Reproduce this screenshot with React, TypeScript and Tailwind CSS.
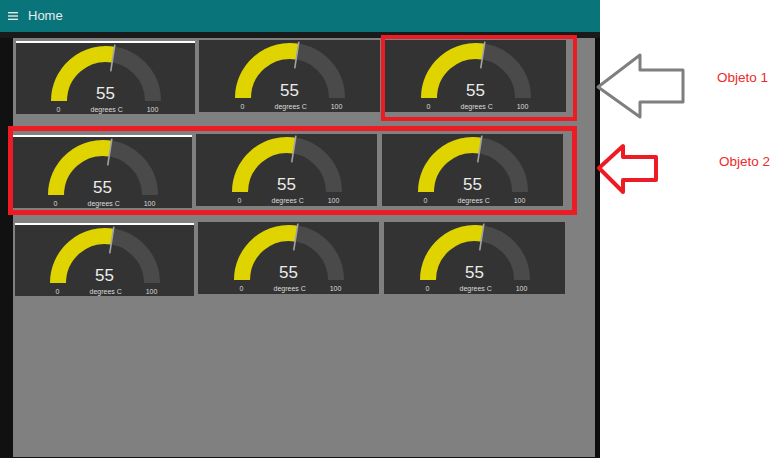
import React from "react";

const font = { fontFamily: '"Liberation Sans", Arial, sans-serif' };

// one gauge widget (value 55 of 0..100)
const Gauge = ({ width, first }: { width: string; first?: boolean }) => {
  return (
    <div
      className={
        "relative shrink-0 bg-[#333333] " +
        width +
        (first ? " mt-[1px] h-[73px] border-t-2 border-white" : " h-[72px]")
      }
    >
      <svg
        className="absolute left-1/2 top-[1px] -translate-x-1/2"
        width="116"
        height="58"
        viewBox="0 0 116 58"
      >
        <path d="M 11 57 A 47 47 0 0 1 105 57" fill="none" stroke="#4a4a4a" strokeWidth="16" />
        <path d="M 11 57 A 47 47 0 0 1 65.35 10.58" fill="none" stroke="#e0d400" strokeWidth="16" />
        <line x1="66.9" y1="0.7" x2="62.7" y2="27.4" stroke="#a3a3a3" strokeWidth="1.6" />
      </svg>
      <div className="relative flex flex-col items-center pt-[42px]">
        <div className="text-[17px] leading-[17px] text-[#ececec]">55</div>
        <div className="mt-[4px] flex gap-[17px] text-[7px] leading-[7px] text-[#dddddd]">
          <span className="w-[30px] text-center">0</span>
          <span className="w-[30px] whitespace-nowrap text-center">degrees C</span>
          <span className="w-[30px] text-center">100</span>
        </div>
      </div>
    </div>
  );
};

const Row = ({ className }: { className: string }) => (
  <div className={"flex items-start " + className}>
    <Gauge width="w-[179px]" first />
    <div className="w-[4px] shrink-0" />
    <Gauge width="w-[181px]" />
    <div className="w-[5px] shrink-0" />
    <Gauge width="w-[181px]" />
  </div>
);

export default function App() {
  return (
    <div className="relative flex h-[458px] w-[778px] overflow-hidden bg-white" style={font}>
      {/* dashboard */}
      <div className="flex w-[600px] shrink-0 flex-col bg-[#111111]">
        <div className="flex h-[32px] items-center gap-[10px] bg-[#097479] pl-[8px]">
          <svg width="10" height="8" viewBox="0 0 10 8">
            <rect x="0" y="0" width="10" height="1.4" fill="#e6e6e6" />
            <rect x="0" y="3.3" width="10" height="1.4" fill="#e6e6e6" />
            <rect x="0" y="6.6" width="10" height="1.4" fill="#e6e6e6" />
          </svg>
          <span className="text-[13px] text-[#e6eeee]">Home</span>
        </div>
        <div className="h-[6px] bg-[#1a1a1a]" />
        <div className="flex flex-1 pb-[1px]">
          <div className="w-[13px] shrink-0" />
          <div className="w-[582px] shrink-0 bg-[#808080] pt-[2px]">
            <Row className="ml-[3px]" />
            <Row className="mt-[20px]" />
            <Row className="ml-[2px] mt-[14px]" />
          </div>
          <div className="w-[5px] shrink-0 bg-[#0d0d0d]" />
        </div>
      </div>

      {/* annotation column */}
      <div className="flex flex-1 flex-col text-[13.5px] leading-[16px] text-[#ee2a2a]">
        <div className="ml-[117px] mt-[70px]">Objeto 1</div>
        <div className="ml-[119px] mt-[68px]">Objeto 2</div>
      </div>

      {/* red highlight boxes drawn over the screenshot */}
      <div className="absolute left-[381px] top-[35px] h-[86px] w-[196px] border-4 border-[#ed1c24]" />
      <div className="absolute left-[8px] top-[126px] h-[89px] w-[569px] border-[5px] border-[#ed1c24]" />

      {/* arrows */}
      <svg className="absolute left-0 top-0" width="778" height="458" viewBox="0 0 778 458">
        <polygon
          points="598,87 640,55 640,70 683,70 683,102 640,102 640,117"
          fill="none"
          stroke="#7f7f7f"
          strokeWidth="3"
          strokeLinejoin="round"
        />
        <polygon
          points="599,168 623,146 623,157 656,157 656,180 623,180 623,192"
          fill="none"
          stroke="#ed1c24"
          strokeWidth="4"
          strokeLinejoin="round"
        />
      </svg>
    </div>
  );
}
